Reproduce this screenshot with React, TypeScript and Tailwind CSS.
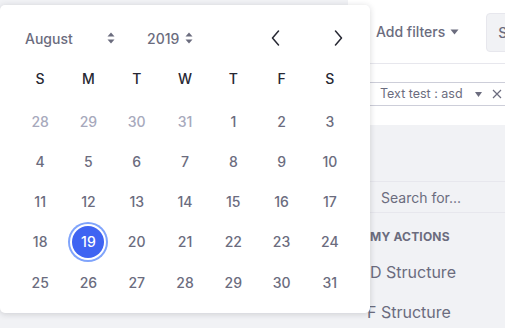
import React from "react";

const weekdays = ["S", "M", "T", "W", "T", "F", "S"];

function SortArrows() {
  return (
    <svg width="8" height="12" viewBox="0 0 8 12" className="block">
      <path d="M4 0.5 L7.5 4.5 H0.5 Z" fill="#6b6c7e" />
      <path d="M4 11.5 L7.5 7.5 H0.5 Z" fill="#6b6c7e" />
    </svg>
  );
}

function Chevron({ dir }: { dir: "left" | "right" }) {
  return (
    <svg width="9" height="16" viewBox="0 0 9 16" className="block">
      <path
        d={dir === "left" ? "M7.5 1 L1.5 8 L7.5 15" : "M1.5 1 L7.5 8 L1.5 15"}
        fill="none"
        stroke="#272833"
        strokeWidth="1.5"
        strokeLinecap="round"
        strokeLinejoin="round"
      />
    </svg>
  );
}

function Caret() {
  return (
    <svg width="9" height="6" viewBox="0 0 9 6" className="block">
      <path d="M0.5 0.5 H8.5 L4.5 5.5 Z" fill="#6b6c7e" />
    </svg>
  );
}

export default function App() {
  const days: { n: number; muted: boolean }[] = [
    { n: 28, muted: true },
    { n: 29, muted: true },
    { n: 30, muted: true },
    { n: 31, muted: true },
  ];
  for (let i = 1; i <= 31; i++) days.push({ n: i, muted: false });

  return (
    <div
      className="relative w-[505px] h-[328px] overflow-hidden bg-[#f1f2f5]"
      style={{ fontFamily: "Inter, 'Noto Sans', sans-serif" }}
    >
      {/* Background page */}
      <div className="flex h-full">
        <div className="w-[348px] shrink-0" />
        <div className="flex-1 min-w-0 flex flex-col">
          <div className="bg-white h-[125px] shrink-0 flex flex-col">
            <div className="h-[64px] shrink-0 flex items-center border-b border-[#e7e7ed] overflow-hidden">
              <div className="ml-[28px] shrink-0 whitespace-nowrap flex items-center gap-[5px] text-[14px] text-[#6b6c7e] font-medium">
                <span>Add filters</span>
                <Caret />
              </div>
              <div className="ml-[27px] shrink-0 h-[39px] w-[40px] mt-[1px] rounded-[4px] border border-[#e7e7ed] bg-[#f1f2f5] flex items-center pl-[11px] text-[14px] text-[#6b6c7e] font-medium overflow-hidden whitespace-nowrap">
                S
              </div>
            </div>
            <div className="h-[19px] shrink-0 border-b border-[#cdced9]" />
            <div className="h-[23px] shrink-0 border-b border-[#cdced9] flex items-center text-[12.5px] text-[#6b6c7e] whitespace-nowrap">
              <span className="ml-[32px]">Text test : asd</span>
              <span className="ml-[12px]">
                <svg width="7" height="5" viewBox="0 0 7 5" className="block">
                  <path d="M0 0 H7 L3.5 5 Z" fill="#6b6c7e" />
                </svg>
              </span>
              <span className="ml-[10px]">
                <svg width="10" height="10" viewBox="0 0 10 10" className="block">
                  <path d="M1 1 L9 9 M9 1 L1 9" stroke="#6b6c7e" strokeWidth="1.2" />
                </svg>
              </span>
            </div>
          </div>
          <div className="h-[56px] shrink-0" />
          <div className="h-[32px] shrink-0 border-y border-[#e7e7ed] flex items-center text-[14px] text-[#6b6c7e] whitespace-nowrap">
            <span className="ml-[33px]">Search for...</span>
          </div>
          <div className="h-[23px] shrink-0 mt-[12px] flex items-center text-[12px] font-bold text-[#6b6c7e] tracking-[0.2px] whitespace-nowrap">
            <span className="ml-[22px]">MY ACTIONS</span>
          </div>
          <div className="h-[40px] shrink-0 mt-[4px] flex items-center text-[16px] text-[#6b6c7e] whitespace-nowrap">
            <span className="ml-[22px]">D Structure</span>
          </div>
          <div className="h-[40px] shrink-0 flex items-center text-[16px] text-[#6b6c7e] whitespace-nowrap">
            <span className="ml-[19px]">F Structure</span>
          </div>
        </div>
      </div>

      {/* Date picker dropdown */}
      <div className="absolute left-0 top-[5px] w-[370px] h-[308px] bg-white rounded-[5px] shadow-[0_1px_6px_rgba(39,40,51,0.18)] px-[16px] pt-[16px]">
        <div className="h-[34px] flex items-center text-[14px] font-medium text-[#6b6c7e]">
          <span className="ml-[9px] w-[82px]">August</span>
          <SortArrows />
          <span className="ml-[32px]">2019</span>
          <span className="ml-[6px]">
            <SortArrows />
          </span>
          <div className="ml-auto mr-[4px] flex items-center gap-[39px]">
            <div className="w-[24px] flex justify-center">
              <Chevron dir="left" />
            </div>
            <div className="w-[24px] flex justify-center">
              <Chevron dir="right" />
            </div>
          </div>
        </div>
        <div className="mt-[3px] grid grid-cols-7 h-[40px] items-center text-[14px] font-medium text-[#272833]">
          {weekdays.map((w, i) => (
            <div key={i} className="text-center">
              {w}
            </div>
          ))}
        </div>
        <div className="mt-[3px] grid grid-cols-7 auto-rows-[40.25px] text-[14px] font-medium">
          {days.map((d, i) => (
            <div key={i} className="flex items-center justify-center">
              {d.n === 19 && !d.muted ? (
                <span className="w-[32px] h-[32px] rounded-full bg-[#3f64f2] text-white flex items-center justify-center shadow-[0_0_0_2px_#ffffff,0_0_0_4px_#80a4fb]">
                  19
                </span>
              ) : (
                <span className={d.muted ? "text-[#a7a9bc]" : "text-[#6b6c7e]"}>{d.n}</span>
              )}
            </div>
          ))}
        </div>
      </div>
    </div>
  );
}
